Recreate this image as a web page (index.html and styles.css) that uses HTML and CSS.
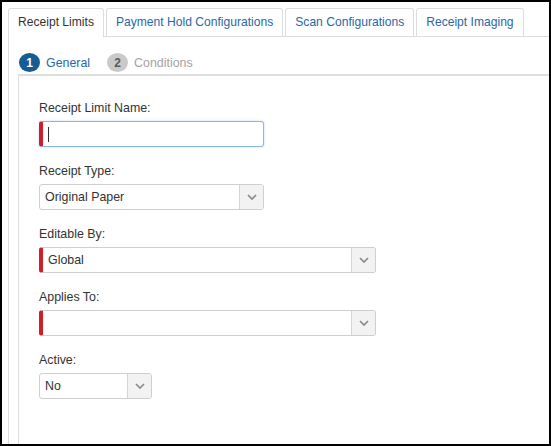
FILE: index.html
```html
<!DOCTYPE html>
<html>
<head>
<meta charset="utf-8">
<link rel="stylesheet" href="styles.css">
</head>
<body>
<div class="frame">
  <ul class="tabs">
    <li class="tab active">Receipt Limits</li>
    <li class="tab">Payment Hold Configurations</li>
    <li class="tab">Scan Configurations</li>
    <li class="tab">Receipt Imaging</li>
  </ul>
  <div class="panel">
    <div class="steps">
      <div class="step current"><span class="num">1</span><span class="lbl">General</span></div>
      <div class="step"><span class="num">2</span><span class="lbl">Conditions</span></div>
    </div>
    <div class="box">
      <div class="field">
        <label class="label">Receipt Limit Name:</label>
        <div class="input w-md required focus"><span class="caret"></span></div>
      </div>
      <div class="field">
        <label class="label">Receipt Type:</label>
        <div class="select w-md">
          <span class="value">Original Paper</span>
          <span class="arrow"><svg width="10" height="6" viewBox="0 0 10 6"><polyline points="1,1 5,5 9,1" fill="none" stroke="#8a8a8a" stroke-width="1.7"/></svg></span>
        </div>
      </div>
      <div class="field">
        <label class="label">Editable By:</label>
        <div class="select w-lg required">
          <span class="value">Global</span>
          <span class="arrow"><svg width="10" height="6" viewBox="0 0 10 6"><polyline points="1,1 5,5 9,1" fill="none" stroke="#8a8a8a" stroke-width="1.7"/></svg></span>
        </div>
      </div>
      <div class="field">
        <label class="label">Applies To:</label>
        <div class="select w-lg required">
          <span class="value"></span>
          <span class="arrow"><svg width="10" height="6" viewBox="0 0 10 6"><polyline points="1,1 5,5 9,1" fill="none" stroke="#8a8a8a" stroke-width="1.7"/></svg></span>
        </div>
      </div>
      <div class="field">
        <label class="label">Active:</label>
        <div class="select w-sm">
          <span class="value">No</span>
          <span class="arrow"><svg width="10" height="6" viewBox="0 0 10 6"><polyline points="1,1 5,5 9,1" fill="none" stroke="#8a8a8a" stroke-width="1.7"/></svg></span>
        </div>
      </div>
    </div>
  </div>
</div>
</body>
</html>
```

FILE: styles.css
```css
* { box-sizing: border-box; }
html, body { margin: 0; padding: 0; background: #fff; }
body { font-family: "Liberation Sans", Arial, sans-serif; font-size: 12.4px; color: #333; }

.frame {
  width: 551px;
  height: 446px;
  border: 2px solid #000;
  overflow: hidden;
  padding: 6px 0 0 6px;
  display: flex;
  flex-direction: column;
}

.tabs {
  list-style: none;
  margin: 0;
  padding: 0;
  display: flex;
  border-bottom: 1px solid #ddd;
}
.tab {
  height: 28px;
  padding: 0 9px;
  margin-right: 2px;
  border: 1px solid #ddd;
  border-bottom: 0;
  border-radius: 3px 3px 0 0;
  line-height: 26px;
  font-size: 12.1px;
  color: #2a67a6;
  white-space: nowrap;
  background: #fff;
}
.tab.active {
  color: #333;
  height: 29px;
  margin-bottom: -1px;
}

.panel {
  flex: 1;
  border-left: 1px solid #ddd;
  display: flex;
  flex-direction: column;
}

.steps {
  display: flex;
  align-items: center;
  padding: 14px 0 0 10px;
  height: 37px;
}
.step {
  display: flex;
  align-items: center;
  margin-right: 17px;
}
.num {
  width: 21px;
  height: 19px;
  border-radius: 50%;
  display: flex;
  align-items: center;
  justify-content: center;
  font-weight: bold;
  font-size: 12px;
  background: #c9c9c9;
  color: #5a5a5a;
  margin-right: 6px;
}
.lbl { color: #a3a3a3; }
.step.current .num { background: #175b94; color: #fff; }
.step.current .lbl { color: #2a67a6; }

.box {
  flex: 1;
  margin-left: 9px;
  border-top: 2px solid #dedede;
  border-left: 1px solid #dedede;
  padding: 24px 0 0 20px;
}

.field { margin-bottom: 16px; }
.label {
  display: block;
  line-height: 16px;
  margin-bottom: 5px;
  color: #333;
}

.w-sm { width: 113px; }
.w-md { width: 225px; }
.w-lg { width: 337px; }

.input {
  height: 26px;
  border: 1px solid #8db6e2;
  border-radius: 3px;
  box-shadow: 0 0 2px rgba(102, 160, 225, 0.5);
  padding-left: 5px;
  display: flex;
  align-items: center;
}
.caret {
  width: 1px;
  height: 15px;
  background: #333;
}

.select {
  height: 26px;
  border: 1px solid #cfcfcf;
  border-radius: 3px;
  display: flex;
  background: #fff;
}
.select .value {
  flex: 1;
  padding-left: 5px;
  line-height: 24px;
  color: #333;
}
.select .arrow {
  width: 24px;
  border-left: 1px solid #d4d4d4;
  background: #f2f2f2;
  border-radius: 0 2px 2px 0;
  display: flex;
  align-items: center;
  justify-content: center;
}

.required { border-left: 4px solid #cf1f2c; }
```
